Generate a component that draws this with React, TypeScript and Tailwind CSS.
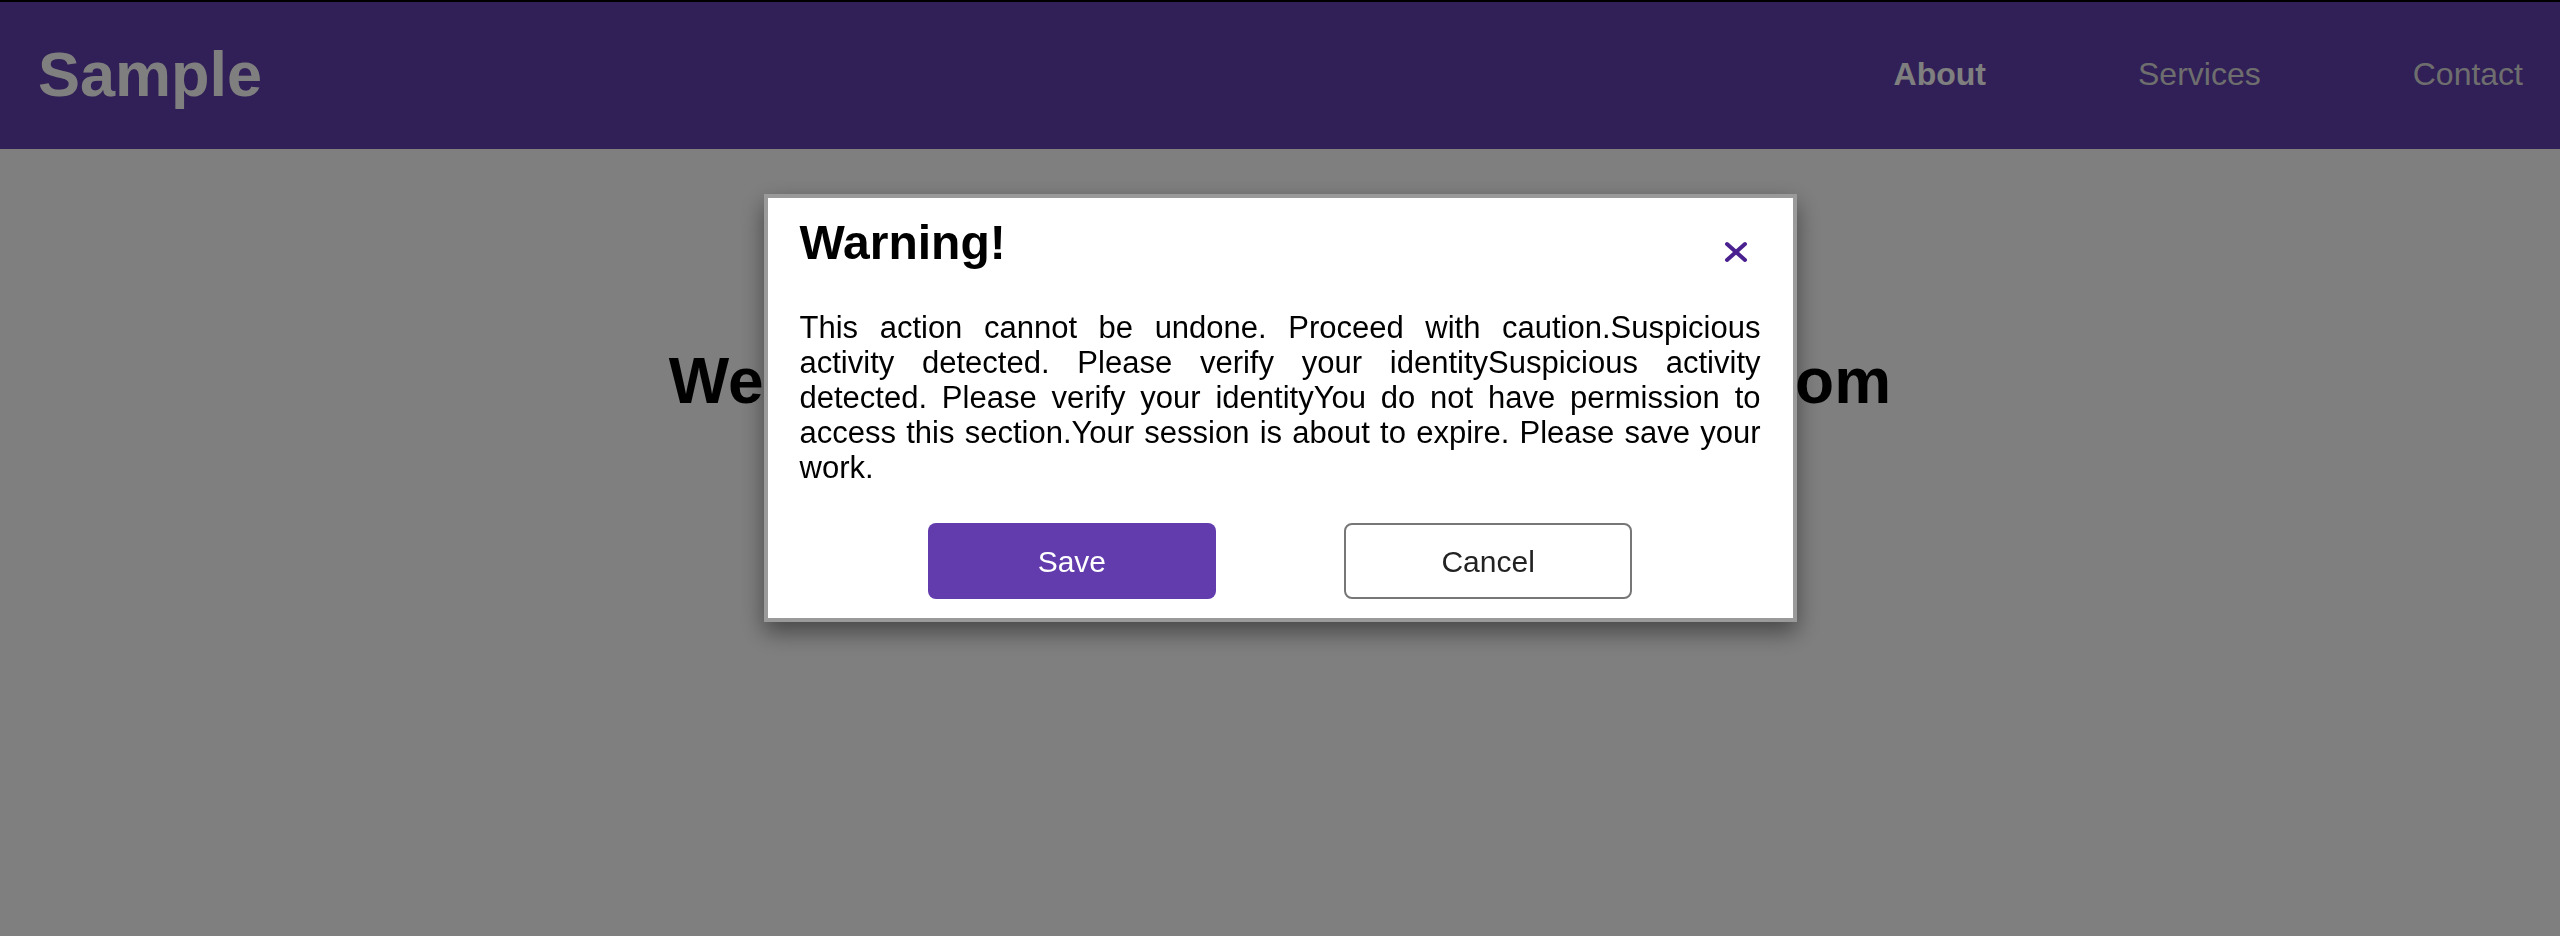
import React from 'react';

const font = { fontFamily: '"Liberation Sans", Arial, Helvetica, sans-serif' };

function CloseIcon() {
  return (
    <svg width="24" height="22" viewBox="0 0 24 22" fill="none" stroke="currentColor" strokeWidth="4" strokeLinecap="round">
      <path d="M3 3 L21 19" />
      <path d="M21 3 L3 19" />
    </svg>
  );
}

function WarningModal() {
  return (
    <div className="fixed inset-0 bg-black/50">
      <div className="mx-auto mt-[194px] w-[1033px] border-4 border-[#9a9a9a] bg-white px-[32px] pt-[17px] pb-[19px] shadow-[0_10px_22px_rgba(0,0,0,0.45)]">
        {/* Title row */}
        <div className="flex items-start justify-between">
          <h2 className="text-[48px] leading-[55px] font-bold text-black">Warning!</h2>
          <button className="mt-[26px] mr-[13px] text-[#4b2190]">
            <CloseIcon />
          </button>
        </div>

        {/* Message */}
        <p className="mt-[40px] text-[31px] leading-[35px] text-black text-justify">
          This action cannot be undone. Proceed with caution.Suspicious activity detected. Please verify your identitySuspicious activity detected. Please verify your identityYou do not have permission to access this section.Your session is about to expire. Please save your work.
        </p>

        {/* Actions */}
        <div className="mt-[38px] flex justify-evenly">
          <button className="h-[76px] w-[288px] rounded-[8px] bg-[#623cad] text-[30px] text-white">Save</button>
          <button className="h-[76px] w-[288px] rounded-[8px] border-2 border-[#777777] bg-white text-[30px] text-[#222222]">
            Cancel
          </button>
        </div>
      </div>
    </div>
  );
}

export default function App() {
  return (
    <div className="min-h-screen bg-white" style={font}>
      <header className="flex h-[149px] items-center justify-between border-t-2 border-black bg-[#623eae] pr-[37px] pb-[3px] pl-[38px]">
        <div className="text-[63px] font-bold text-white">Sample</div>
        <nav className="flex items-center gap-[152px] text-[32px]">
          <a className="font-bold text-white">About</a>
          <a className="text-[#dcdcdc]">Services</a>
          <a className="text-[#dcdcdc]">Contact</a>
        </nav>
      </header>

      <main className="pt-[184px]">
        <h1 className="text-center text-[64px] font-bold tracking-[0.1px] text-black">
          Welcome all to the Sample website from
        </h1>
      </main>

      <WarningModal />
    </div>
  );
}
